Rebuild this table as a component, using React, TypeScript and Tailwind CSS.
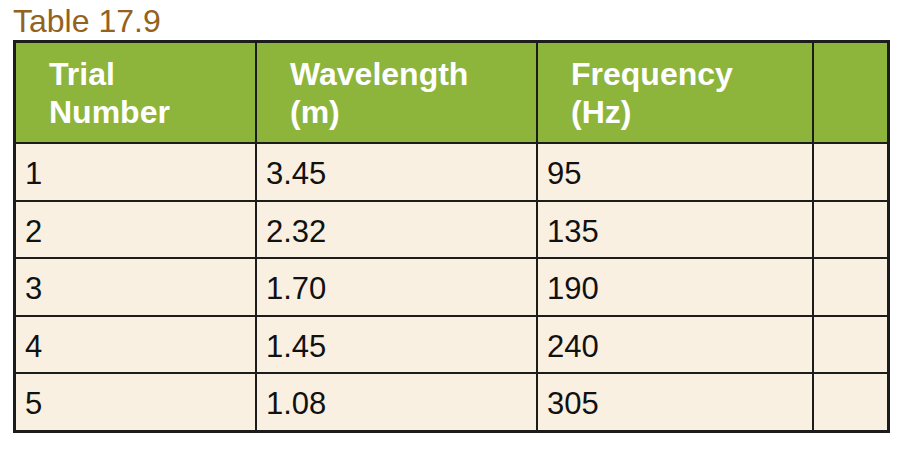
const rows = [
  ["1", "3.45", "95"],
  ["2", "2.32", "135"],
  ["3", "1.70", "190"],
  ["4", "1.45", "240"],
  ["5", "1.08", "305"],
];

const headers = [
  ["Trial", "Number"],
  ["Wavelength", "(m)"],
  ["Frequency", "(Hz)"],
  ["", ""],
];

export default function App() {
  return (
    <div className="w-[900px] h-[449px] bg-white pl-[13px] pt-[2px] font-['Liberation_Sans',Arial,sans-serif]">
      <div className="text-[32px] leading-[38px] text-[#93621f]">Table 17.9</div>
      <div className="w-[877px] border-[3px] border-[#1c1c1c] bg-[#1c1c1c]">
        <div className="grid grid-cols-[239px_279px_274px_1fr] gap-[2px]">
          {headers.map((h, i) => (
            <div
              key={i}
              className="h-[99px] bg-[#8db53b] pl-[33px] pt-[12px] text-[32px] leading-[38px] font-bold text-white"
            >
              <div>{h[0]}</div>
              <div>{h[1]}</div>
            </div>
          ))}
          {rows.map((r, i) => (
            <div key={i} className="contents">
              {r.map((c, j) => (
                <div
                  key={j}
                  className="h-[55.6px] bg-[#faf0e2] pl-[9px] pt-[2px] text-[31px] leading-[56px] text-[#111]"
                >
                  {c}
                </div>
              ))}
              <div className="h-[55.6px] bg-[#faf0e2]" />
            </div>
          ))}
        </div>
      </div>
    </div>
  );
}
